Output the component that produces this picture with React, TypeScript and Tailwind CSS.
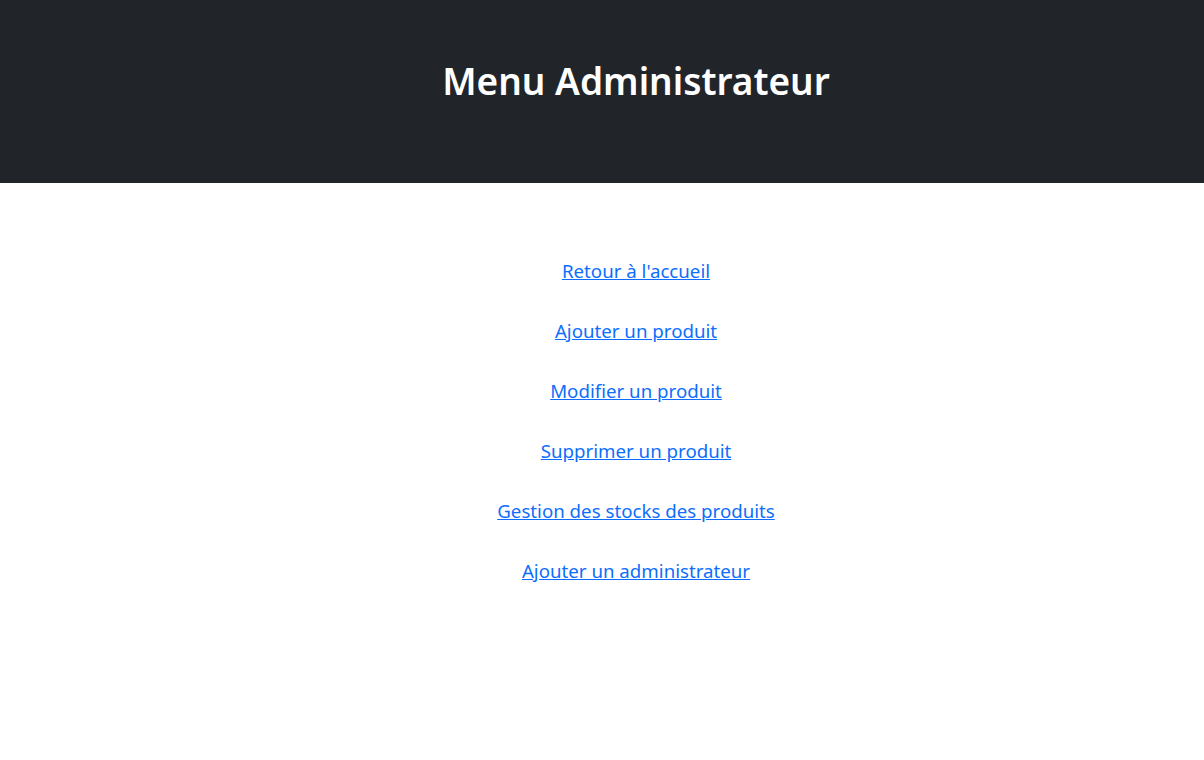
const links = [
  "Retour à l'accueil",
  'Ajouter un produit',
  'Modifier un produit',
  'Supprimer un produit',
  'Gestion des stocks des produits',
  'Ajouter un administrateur',
];

export default function App() {
  return (
    <div className="min-h-[760px] bg-white font-['Noto_Sans',sans-serif]">
      {/* Dark banner */}
      <header className="h-[183px] bg-[#212529] pl-[68px] pt-[59px] text-center">
        <h1 className="text-[37px] font-semibold leading-[1.2] text-white">Menu Administrateur</h1>
      </header>

      {/* Admin links */}
      <nav className="flex flex-col items-center gap-[30px] pl-[68px] pt-[73px]">
        {links.map((label) => (
          <a key={label} href="#" className="text-[18.7px] leading-[30px] text-[#0d6efd] underline">
            {label}
          </a>
        ))}
      </nav>
    </div>
  );
}
